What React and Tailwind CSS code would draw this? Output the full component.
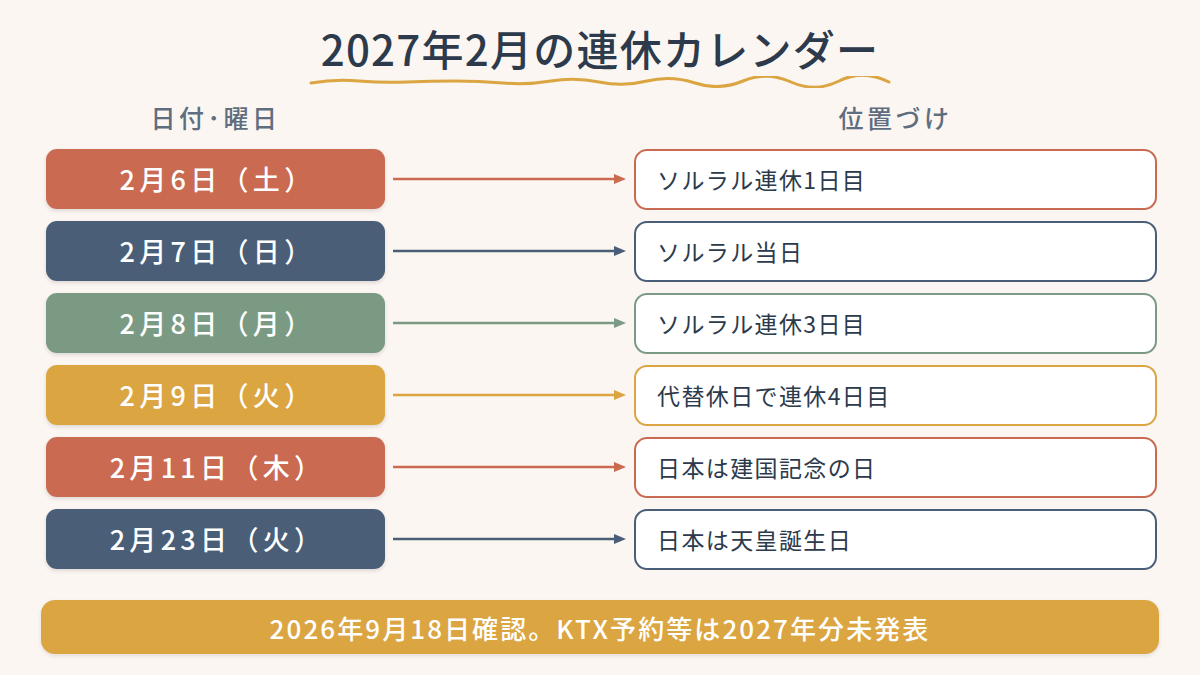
import React from "react";

const rows = [
  { date: "2月6日（土）", text: "ソルラル連休1日目", color: "#c96a51" },
  { date: "2月7日（日）", text: "ソルラル当日", color: "#4a5f77" },
  { date: "2月8日（月）", text: "ソルラル連休3日目", color: "#7b9a83" },
  { date: "2月9日（火）", text: "代替休日で連休4日目", color: "#dba542" },
  { date: "2月11日（木）", text: "日本は建国記念の日", color: "#c96a51" },
  { date: "2月23日（火）", text: "日本は天皇誕生日", color: "#4a5f77" },
];

function Arrow({ color }) {
  return (
    <svg width="233" height="12" viewBox="0 0 233 12" className="block">
      <line x1="0" y1="6" x2="223" y2="6" stroke={color} strokeWidth="2.5" />
      <polygon points="221,1 233,6 221,11" fill={color} />
    </svg>
  );
}

export default function App() {
  return (
    <div
      className="w-[1200px] h-[675px] bg-[#fbf6f1] flex flex-col overflow-hidden"
      style={{ fontFamily: '"Noto Sans CJK JP", "Noto Sans", sans-serif' }}
    >
      <div className="flex flex-col items-center pt-[20px]">
        <h1 className="text-[42px] leading-[56px] font-medium text-[#2c3a4c] tracking-[0.03em]">
          2027年2月の連休カレンダー
        </h1>
        <svg width="582" height="12" viewBox="0 0 582 12" className="block">
          <path
            d="M2 7 Q 26 3 50 5 T 98 6 T 146 5 T 194 7 T 242 5 T 290 6 T 338 5 T 386 7 T 434 5 T 482 6 T 530 5 T 580 6"
            fill="none"
            stroke="#dba542"
            strokeWidth="3"
            strokeLinecap="round"
          />
        </svg>
      </div>

      <div className="flex pl-[46px] pr-[43px] mt-[13px]">
        <div className="w-[339px] text-center text-[25px] leading-[32px] font-medium text-[#5e6e80] tracking-[0.14em]">
          日付･曜日
        </div>
        <div className="flex-1" />
        <div className="w-[523px] text-center text-[25px] leading-[32px] font-medium text-[#5e6e80] tracking-[0.14em]">
          位置づけ
        </div>
      </div>

      <div className="flex flex-col gap-[12px] pl-[46px] pr-[43px] mt-[16px]">
        {rows.map((r, i) => (
          <div key={i} className="flex items-center h-[60px]">
            <div
              className="w-[339px] h-[60px] rounded-[11px] flex items-center justify-center text-white text-[27px] font-medium tracking-[0.16em] pl-[4px] shadow-[0_2px_4px_rgba(0,0,0,0.12)]"
              style={{ backgroundColor: r.color }}
            >
              {r.date}
            </div>
            <div className="flex-1 flex justify-center">
              <Arrow color={r.color} />
            </div>
            <div
              className="w-[523px] h-[61px] rounded-[13px] border-[2.5px] bg-white flex items-center pl-[21px] text-[23px] text-[#2c3a4c] tracking-[0.06em]"
              style={{ borderColor: r.color }}
            >
              {r.text}
            </div>
          </div>
        ))}
      </div>

      <div className="px-[41px] mt-[31px]">
        <div className="h-[54px] rounded-[14px] bg-[#dba542] flex items-center justify-center text-white text-[26px] font-medium tracking-[0.08em] shadow-[0_2px_4px_rgba(0,0,0,0.1)]">
          2026年9月18日確認。KTX予約等は2027年分未発表
        </div>
      </div>
    </div>
  );
}
